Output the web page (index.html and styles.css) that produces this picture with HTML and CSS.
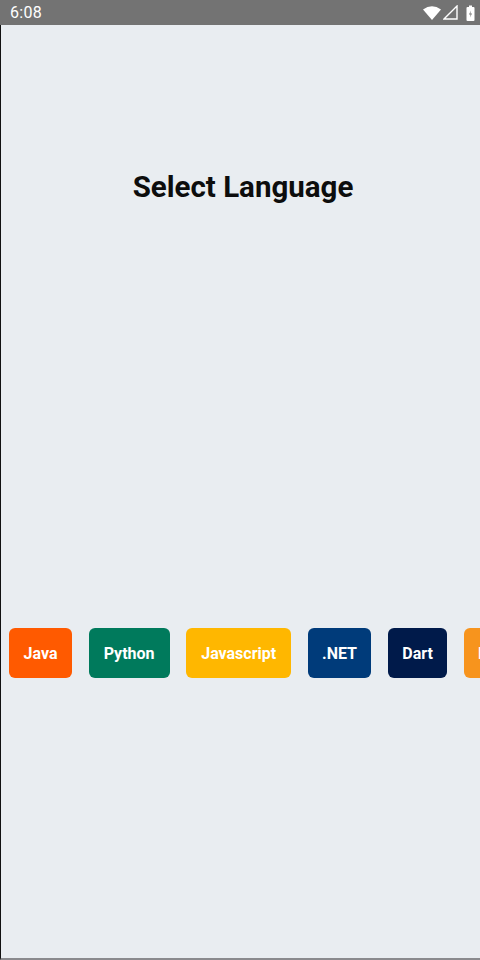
FILE: index.html
```html
<!DOCTYPE html>
<html>
<head>
<meta charset="utf-8">
<link rel="stylesheet" href="styles.css">
</head>
<body>
<div class="status">
  <span class="time">6:08</span>
  <div class="icons">
    <svg class="wifi" width="18" height="14" viewBox="0 0 18 14"><path d="M0 3.5 Q9 -3 18 3.5 L9 14 Z" fill="#fff"/></svg>
    <svg class="signal" width="15" height="15" viewBox="0 0 15 15"><path d="M14 1 L14 14 L1 14 Z" fill="none" stroke="#fff" stroke-width="1.4" stroke-linejoin="miter"/></svg>
    <svg class="battery" width="9" height="16" viewBox="0 0 9 16"><rect x="0.5" y="2" width="8" height="14" rx="1" fill="#fff"/><rect x="3" y="0.5" width="3" height="2" fill="#fff"/><path d="M5 5.5 L3 9.5 L4.6 9.5 L4 12.5 L6 8.5 L4.4 8.5 Z" fill="#737373"/></svg>
  </div>
</div>
<main class="screen">
  <h1 class="title">Select Language</h1>
  <div class="chips">
    <div class="chip java">Java</div>
    <div class="chip python">Python</div>
    <div class="chip js">Javascript</div>
    <div class="chip net">.NET</div>
    <div class="chip dart">Dart</div>
    <div class="chip kotlin">Kotlin</div>
  </div>
</main>
</body>
</html>
```
FILE: styles.css
```css
* { box-sizing: border-box; }
html, body { margin: 0; padding: 0; }
body {
  width: 480px;
  height: 960px;
  overflow: hidden;
  font-family: Roboto, "Liberation Sans", sans-serif;
  background: #e9edf1;
  display: flex;
  flex-direction: column;
}
.status {
  height: 25px;
  background: #737373;
  display: flex;
  align-items: center;
  justify-content: space-between;
  padding: 0 5px 0 10px;
  color: #fff;
  flex-shrink: 0;
}
.time { font-size: 16px; letter-spacing: 0.3px; }
.icons { display: flex; align-items: center; }
.wifi { margin-right: 2px; }
.signal { margin-right: 8px; }
.screen {
  flex: 1;
  border-left: 1px solid #111;
  border-bottom: 2px solid #8a8a8e;
  display: flex;
  flex-direction: column;
  overflow: hidden;
}
.title {
  margin: 144px 0 0;
  text-align: center;
  font-size: 29.5px;
  font-weight: 700;
  color: #0d0d0d;
  line-height: 36px;
  padding-left: 5px;
}
.chips {
  margin-top: 423px;
  display: flex;
  gap: 16.6px;
  padding-left: 8px;
  white-space: nowrap;
}
.chip {
  flex-shrink: 0;
  height: 50px;
  border-radius: 6px;
  color: #fff;
  font-weight: 700;
  font-size: 16px;
  display: flex;
  align-items: center;
  justify-content: center;
  padding: 0 14px;
}
.java { background: #ff5a00; width: 63px; }
.python { background: #007a5c; width: 81px; }
.js { background: #ffb700; width: 105px; }
.net { background: #003b7a; width: 63.5px; }
.dart { background: #001a4a; width: 59.6px; }
.kotlin { background: #f7941d; }
```
